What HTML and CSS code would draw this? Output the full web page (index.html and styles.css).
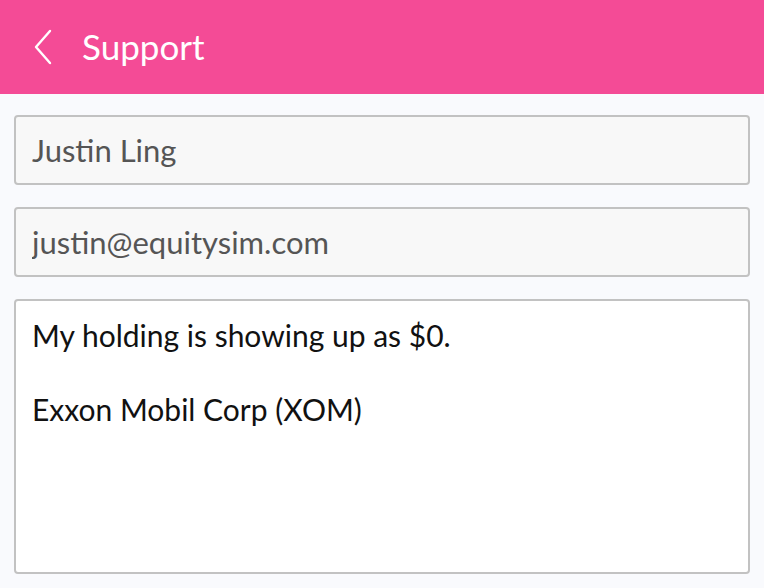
FILE: index.html
```html
<!DOCTYPE html>
<html lang="en">
<head>
    <meta charset="UTF-8">
    <meta name="viewport" content="width=device-width, initial-scale=1.0">
    <title>Support</title>
    <link rel="stylesheet" href="styles.css">
</head>
<body>
    <header class="top-bar">
        <button type="button" class="back-btn" aria-label="Back">
            <svg width="20" height="36" viewBox="0 0 20 36">
                <path d="M17 2 L3 18 L17 34" fill="none" stroke="#fff" stroke-width="2.4" stroke-linecap="round" stroke-linejoin="round"/>
            </svg>
        </button>
        <h1>Support</h1>
    </header>

    <form class="support-form">
        <input type="text" class="field" value="Justin Ling">
        <input type="email" class="field" value="justin@equitysim.com">
        <textarea class="field message">My holding is showing up as $0.

Exxon Mobil Corp (XOM)</textarea>
    </form>
</body>
</html>
```

FILE: styles.css
```css
/* Global styles */
* {
    margin: 0;
    padding: 0;
    box-sizing: border-box;
}

body {
    font-family: 'Lato', 'Noto Sans', sans-serif;
    background: #f9fafd;
    height: 100vh;
    display: flex;
    flex-direction: column;
}

/* Header */
.top-bar {
    height: 94px;
    background: #f44b96;
    display: flex;
    align-items: center;
    padding: 0 0 3px 33px;
    gap: 29px;
}

.back-btn {
    background: none;
    border: none;
    display: flex;
    cursor: pointer;
    margin-top: 3px;
}

.top-bar h1 {
    color: #fff;
    font-size: 35px;
    font-weight: 400;
}

/* Form */
.support-form {
    flex: 1;
    display: flex;
    flex-direction: column;
    gap: 22px;
    padding: 21px 14px 14px;
}

.field {
    font-family: inherit;
    width: 100%;
    height: 70px;
    padding: 0 16px;
    border: 2px solid #c2c2c2;
    border-radius: 4px;
    background: #f8f8f8;
    color: #555;
    font-size: 31px;
    outline: none;
}

.message {
    flex: 1;
    height: auto;
    background: #fff;
    color: #111;
    font-size: 30px;
    padding: 16px 16px;
    line-height: 37px;
    resize: none;
}
```
